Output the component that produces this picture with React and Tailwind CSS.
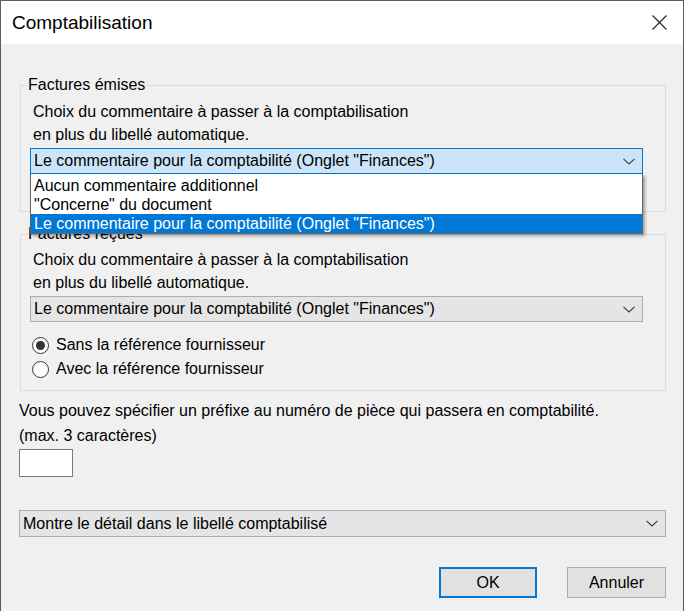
import { useState } from "react";

function Chevron() {
    return (
        <svg width="12" height="7" viewBox="0 0 12 7" className="shrink-0">
            <path d="M0.5 0.8 L6 6 L11.5 0.8" fill="none" stroke="#3c3c3c" strokeWidth="1.1" />
        </svg>
    );
}

function Combo({ value, className = "" }) {
    return (
        <div
            className={`flex items-center justify-between border border-[#adadad] bg-[#e5e5e5] pl-[3px] pr-[7px] text-black ${className}`}
        >
            <span className="whitespace-nowrap">{value}</span>
            <Chevron />
        </div>
    );
}

function Radio({ checked, label }) {
    return (
        <label className="flex h-[24px] items-center gap-[7px]">
            <span className="flex h-[17px] w-[17px] items-center justify-center rounded-full border border-[#333] bg-white">
                {checked && <span className="h-[9px] w-[9px] rounded-full bg-[#333]" />}
            </span>
            <span>{label}</span>
        </label>
    );
}

const options = [
    "Aucun commentaire additionnel",
    "\"Concerne\" du document",
    "Le commentaire pour la comptabilité (Onglet \"Finances\")",
];

export default function App() {
    const [selected] = useState(2);
    const [withRef, setWithRef] = useState(false);
    const font = { fontFamily: "'Liberation Sans', Arial, sans-serif" };

    return (
        <div
            className="flex h-[611px] w-[684px] flex-col border-x border-t border-[#5c5c5c] bg-[#f0f0f0] text-[16px] text-black"
            style={font}
        >
            <div className="flex h-[43px] shrink-0 items-center justify-between bg-white pl-[11px] pr-[16px]">
                <span className="pt-[2px] text-[19px]">Comptabilisation</span>
                <svg width="15" height="15" viewBox="0 0 15 15">
                    <path d="M0.5 0.5 L14.5 14.5 M14.5 0.5 L0.5 14.5" stroke="#222" strokeWidth="1.1" />
                </svg>
            </div>

            <div className="flex flex-1 flex-col pl-[18px] pr-[17px]">
                {/* Factures émises */}
                <fieldset className="relative z-10 ml-[1px] mt-[32px] border border-[#dcdcdc] pb-[37px] pl-[9px] pr-[22px]">
                    <legend className="ml-[-3px] px-[1px] leading-[18px]">Factures émises</legend>
                    <div className="pl-[3px] pt-[6px] leading-[23px]">
                        <div>Choix du commentaire à passer à la comptabilisation</div>
                        <div>en plus du libellé automatique.</div>
                    </div>
                    <div className="relative mt-[2px]">
                        <div className="flex h-[26px] items-center justify-between border border-[#0078d7] bg-[#cce4f7] pl-[3px] pr-[7px]">
                            <span className="whitespace-nowrap">{options[selected]}</span>
                            <Chevron />
                        </div>
                        <ul className="absolute left-0 right-0 top-full border border-t-0 border-[#646464] bg-white pt-[2px] shadow-[2px_2px_3px_rgba(0,0,0,0.35)]">
                            {options.map((o, i) => (
                                <li
                                    key={i}
                                    className={`flex h-[19px] items-center whitespace-nowrap pl-[3px] ${
                                        i === selected ? "bg-[#0078d7] text-white" : ""
                                    }`}
                                >
                                    {o}
                                </li>
                            ))}
                        </ul>
                    </div>
                </fieldset>

                {/* Factures reçues */}
                <fieldset className="ml-[1px] mt-[13px] border border-[#dcdcdc] pb-[9px] pl-[9px] pr-[22px]">
                    <legend className="ml-[-3px] px-[1px] leading-[18px]">Factures reçues</legend>
                    <div className="pl-[3px] pt-[5px] leading-[23px]">
                        <div>Choix du commentaire à passer à la comptabilisation</div>
                        <div>en plus du libellé automatique.</div>
                    </div>
                    <Combo
                        className="mt-[2px] h-[26px]"
                        value={"Le commentaire pour la comptabilité (Onglet \"Finances\")"}
                    />
                    <div className="mt-[11px] pl-[2px]" onClick={() => setWithRef(!withRef)}>
                        <Radio checked={!withRef} label="Sans la référence fournisseur" />
                        <Radio checked={withRef} label="Avec la référence fournisseur" />
                    </div>
                </fieldset>

                <div className="mt-[7px] leading-[25px]">
                    <div>Vous pouvez spécifier un préfixe au numéro de pièce qui passera en comptabilité.</div>
                    <div>(max. 3 caractères)</div>
                </div>
                <input
                    type="text"
                    maxLength={3}
                    className="mt-[1px] h-[28px] w-[54px] border border-[#7a7a7a] bg-white px-1 outline-none"
                />

                <Combo className="mt-[33px] h-[27px]" value="Montre le détail dans le libellé comptabilisé" />

                <div className="mt-[30px] flex justify-end gap-[30px]">
                    <button className="h-[31px] w-[98px] border-2 border-[#0078d7] bg-[#e1e1e1] text-[16px]">
                        OK
                    </button>
                    <button className="h-[31px] w-[99px] border border-[#adadad] bg-[#e1e1e1] text-[16px]">
                        Annuler
                    </button>
                </div>
            </div>
        </div>
    );
}
